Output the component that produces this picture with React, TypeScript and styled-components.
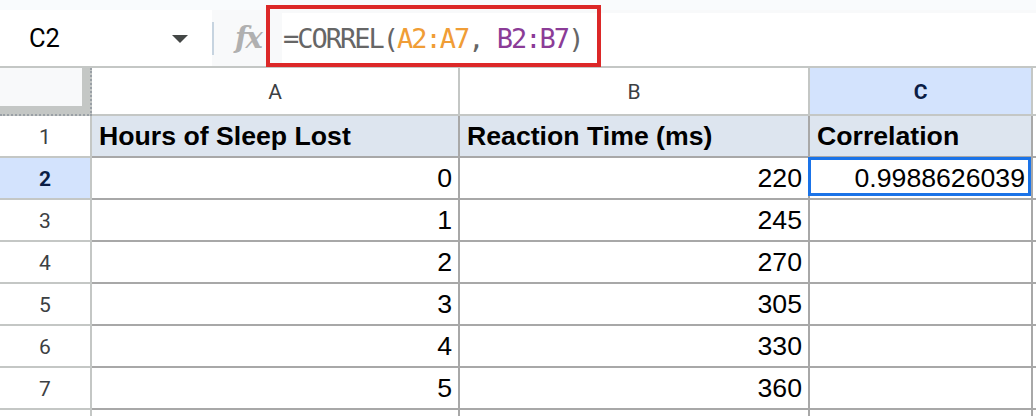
import React from "react";
import styled, { createGlobalStyle } from "styled-components";

const Global = createGlobalStyle`
  html, body { margin: 0; padding: 0; background: #ffffff; }
  body { width: 1036px; height: 416px; overflow: hidden; font-family: "Liberation Sans", Arial, sans-serif; }
`;

const Page = styled.div`
  position: relative;
  width: 1036px;
  height: 416px;
  overflow: hidden;
  background: #ffffff;
`;

const TopStrip = styled.div`
  height: 10px;
  background: #f9fbfd;
`;

const Bar = styled.div`
  display: flex;
  height: 56px;
  background: #f8f9fa;
  border-bottom: 2px solid #c4c7c5;
`;

const NameBox = styled.div`
  width: 212px;
  box-sizing: border-box;
  background: #ffffff;
  display: flex;
  align-items: center;
  justify-content: space-between;
  padding: 0 24px 0 29px;
  font-family: Roboto, "Liberation Sans", sans-serif;
  font-size: 25.5px;
  color: #000000;
`;

const Caret = styled.span`
  width: 0;
  height: 0;
  border-left: 8px solid transparent;
  border-right: 8px solid transparent;
  border-top: 8px solid #444746;
  margin-top: 1px;
`;

const Divider = styled.div`
  width: 2px;
  height: 33px;
  align-self: center;
  background: #c7d4e0;
`;

const FxArea = styled.div`
  width: 68px;
  box-sizing: border-box;
  display: flex;
  align-items: center;
  padding-left: 21px;
  font-family: "DejaVu Serif", "Liberation Serif", serif;
  font-style: italic;
  font-weight: bold;
  font-size: 29px;
  color: #b0b0b0;
  letter-spacing: -2px;
`;

const FormulaInput = styled.div`
  flex: 1;
  margin-top: 3px;
  background: #ffffff;
  display: flex;
  align-items: center;
  padding-left: 1px;
  padding-bottom: 3px;
  font-family: "DejaVu Sans Mono", "Liberation Mono", monospace;
  font-size: 27px;
  letter-spacing: -2px;
  color: #666666;
  white-space: pre;
`;

const Ref = styled.span<{ $color: string }>`
  color: ${(p) => p.$color};
`;

const Highlight = styled.div`
  position: absolute;
  left: 266px;
  top: 5px;
  width: 335px;
  height: 62px;
  box-sizing: border-box;
  border: 4px solid #dc2828;
  pointer-events: none;
`;

const Grid = styled.div`
  display: grid;
  grid-template-columns: 92px 368px 350px 223px 1fr;
  grid-template-rows: 48px repeat(8, 42px);
`;

const Corner = styled.div`
  position: relative;
  background: #c4c7c5;
  border-right: 2px dotted #9aa0a6;
  border-bottom: 2px dotted #9aa0a6;
  box-sizing: border-box;
  &::before {
    content: "";
    position: absolute;
    left: 0;
    top: 0;
    width: 82px;
    height: 38px;
    background: #f8f9fa;
  }
`;

const ColHead = styled.div<{ $active?: boolean }>`
  display: flex;
  align-items: center;
  justify-content: center;
  box-sizing: border-box;
  border-right: 2px solid #c4c7c5;
  border-bottom: 2px solid #c4c7c5;
  background: ${(p) => (p.$active ? "#d3e3fd" : "#ffffff")};
  color: ${(p) => (p.$active ? "#0b1d45" : "#3c4043")};
  font-weight: ${(p) => (p.$active ? "bold" : "normal")};
  font-family: Roboto, "Liberation Sans", sans-serif;
  font-size: 21px;
  padding-top: 1px;
`;

const RowHead = styled.div<{ $active?: boolean }>`
  display: flex;
  align-items: center;
  justify-content: center;
  box-sizing: border-box;
  border-right: 2px solid #c4c7c5;
  border-bottom: 2px solid #c4c7c5;
  background: ${(p) => (p.$active ? "#d3e3fd" : "#ffffff")};
  color: ${(p) => (p.$active ? "#0b1d45" : "#3c4043")};
  font-weight: ${(p) => (p.$active ? "bold" : "normal")};
  font-family: Roboto, "Liberation Sans", sans-serif;
  font-size: 21px;
  padding-top: 1px;
`;

const Cell = styled.div<{ $header?: boolean; $right?: boolean; $selected?: boolean }>`
  position: relative;
  display: flex;
  align-items: center;
  justify-content: ${(p) => (p.$right ? "flex-end" : "flex-start")};
  box-sizing: border-box;
  padding: 1px 6px 0 7px;
  border-right: 2px solid #a8a8a8;
  border-bottom: 2px solid #a8a8a8;
  background: ${(p) => (p.$header ? "#dde5ef" : "#ffffff")};
  font-family: "Liberation Sans", Arial, sans-serif;
  font-size: 26.67px;
  font-weight: ${(p) => (p.$header ? "bold" : "normal")};
  color: #000000;
  white-space: nowrap;
  ${(p) =>
    p.$selected &&
    `
    &::after {
      content: "";
      position: absolute;
      left: -2px;
      top: -1px;
      right: 0;
      bottom: 2px;
      border: 3px solid #1a73e8;
      pointer-events: none;
    }
  `}
`;

const Edge = styled.div<{ $header?: boolean }>`
  box-sizing: border-box;
  border-bottom: 2px solid ${(p) => (p.$header ? "#c4c7c5" : "#a8a8a8")};
  background: #ffffff;
`;

const headers = ["Hours of Sleep Lost", "Reaction Time (ms)", "Correlation"];
const data: Array<[string, string, string]> = [
  ["0", "220", "0.9988626039"],
  ["1", "245", ""],
  ["2", "270", ""],
  ["3", "305", ""],
  ["4", "330", ""],
  ["5", "360", ""],
];

export default function App() {
  return (
    <Page>
      <Global />
      <TopStrip />
      <Bar>
        <NameBox>
          <span>C2</span>
          <Caret />
        </NameBox>
        <Divider />
        <FxArea>fx</FxArea>
        <FormulaInput>
          =CORREL(<Ref $color="#f09d36">A2:A7</Ref>, <Ref $color="#8b3c97">B2:B7</Ref>)
        </FormulaInput>
      </Bar>
      <Highlight />
      <Grid>
        <Corner />
        <ColHead>A</ColHead>
        <ColHead>B</ColHead>
        <ColHead $active>C</ColHead>
        <Edge $header />

        <RowHead>1</RowHead>
        {headers.map((h) => (
          <Cell key={h} $header>
            {h}
          </Cell>
        ))}
        <Edge />

        {data.map((row, i) => (
          <React.Fragment key={i}>
            <RowHead $active={i === 0}>{i + 2}</RowHead>
            <Cell $right>{row[0]}</Cell>
            <Cell $right>{row[1]}</Cell>
            <Cell $right $selected={i === 0}>
              {row[2]}
            </Cell>
            <Edge />
          </React.Fragment>
        ))}

        <RowHead />
        <Cell />
        <Cell />
        <Cell />
        <Edge />
      </Grid>
    </Page>
  );
}
